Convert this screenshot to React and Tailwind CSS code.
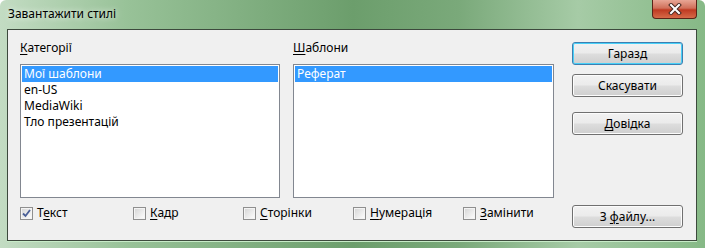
import React from "react";

const font = { fontFamily: '"Noto Sans", "Open Sans", sans-serif' };

function U({ children }) {
  return <span className="underline underline-offset-2">{children}</span>;
}

function Button({ children, isDefault }) {
  return (
    <div
      className={
        "h-[23px] w-[111px] rounded-[3px] border flex items-center justify-center text-[12px] text-black whitespace-pre bg-[linear-gradient(to_bottom,#f2f2f2_0%,#ebebeb_48%,#dddddd_52%,#cfcfcf_100%)] " +
        (isDefault
          ? "border-[#3c7fb1] shadow-[inset_0_0_0_1px_#48d0f8]"
          : "border-[#707070] shadow-[inset_0_0_0_1px_#fcfcfc]")
      }
    >
      {children}
    </div>
  );
}

function Check({ checked, width, children }) {
  return (
    <div className={"flex items-center gap-[4px] " + width}>
      <div className="w-[13px] h-[13px] border border-[#8f8f8f] bg-[#f4f4f4] p-[1px]">
        <div className="w-full h-full bg-[linear-gradient(135deg,#d8d8d8,#fbfbfb)] flex items-center justify-center">
          {checked && (
            <svg width="9" height="9" viewBox="0 0 9 9">
              <path d="M1 4.5 L3.5 7 L8 1" fill="none" stroke="#4a5f97" strokeWidth="1.8" />
            </svg>
          )}
        </div>
      </div>
      <span className="text-[12px] leading-[16px] text-black">{children}</span>
    </div>
  );
}

function ListBox({ items, width }) {
  return (
    <div className={"h-[134px] border border-[#828790] bg-white p-[1px] " + width}>
      {items.map((it, i) => (
        <div
          key={it}
          className={
            "h-[16px] leading-[16px] text-[12px] pl-[2px] " +
            (i === 0 ? "bg-[#3399ff] text-white" : "text-black")
          }
        >
          {it}
        </div>
      ))}
    </div>
  );
}

export default function App() {
  return (
    <div
      style={font}
      className="w-[705px] h-[248px] flex flex-col rounded-t-[6px] overflow-hidden bg-[linear-gradient(to_right,#c3dcc3_0%,#98c298_18%,#6c9e6c_50%,#7aa97a_65%,#a6cba6_82%,#86b986_100%)]"
    >
      {/* Title bar */}
      <div className="h-[29px] flex items-start shrink-0">
        <div className="pl-[8px] pt-[5px] text-[12px] leading-[17px] text-black [text-shadow:0_0_6px_#ffffff]">
          Завантажити стилі
        </div>
        <div className="ml-auto mr-[8px] w-[45px] h-[19px] rounded-b-[4px] border border-t-0 border-[#5a2418] bg-[linear-gradient(to_bottom,#e8a695_0%,#d0705a_45%,#bf3a22_55%,#d66a48_100%)] flex items-center justify-center">
          <svg width="14" height="12" viewBox="0 0 14 12">
            <path d="M3 2 L11 10 M11 2 L3 10" stroke="#4a2a22" strokeWidth="4" strokeLinecap="square" />
            <path d="M3 2 L11 10 M11 2 L3 10" stroke="#ffffff" strokeWidth="2" strokeLinecap="square" />
          </svg>
        </div>
      </div>

      {/* Client area */}
      <div className="flex-1 ml-[7px] mr-[8px] mb-[7px] border border-[#3d4a3d] bg-[#f0f0f0] flex shadow-[0_1px_0_#c8ecc8]">
        <div className="w-[546px] shrink-0 pl-[12px] pt-[9px] flex flex-col">
          <div className="flex gap-[13px]">
            <div className="flex flex-col">
              <div className="h-[17px] leading-[17px] text-[12px] text-black mb-[8px]">
                <U>К</U>атегорії
              </div>
              <ListBox
                width="w-[260px]"
                items={["Мої шаблони", "en-US", "MediaWiki", "Тло презентацій"]}
              />
            </div>
            <div className="flex flex-col">
              <div className="h-[17px] leading-[17px] text-[12px] text-black mb-[8px]">
                <U>Ш</U>аблони
              </div>
              <ListBox width="w-[261px]" items={["Реферат"]} />
            </div>
          </div>
          <div className="flex mt-[7px]">
            <Check checked width="w-[113px]">
              Т<U>е</U>кст
            </Check>
            <Check width="w-[110px]">
              <U>К</U>адр
            </Check>
            <Check width="w-[110px]">
              <U>С</U>торінки
            </Check>
            <Check width="w-[110px]">
              <U>Н</U>умерація
            </Check>
            <Check width="w-[80px]">
              <U>З</U>амінити
            </Check>
          </div>
        </div>

        <div className="ml-[18px] pt-[12px] pb-[12px] flex flex-col">
          <Button isDefault>Гаразд</Button>
          <div className="mt-[9px]">
            <Button>Скасувати</Button>
          </div>
          <div className="mt-[15px]">
            <Button>
              <U>Д</U>овідка
            </Button>
          </div>
          <div className="mt-auto">
            <Button>
              {"З "}
              <U>ф</U>
              {"айлу..."}
            </Button>
          </div>
        </div>
      </div>
    </div>
  );
}
